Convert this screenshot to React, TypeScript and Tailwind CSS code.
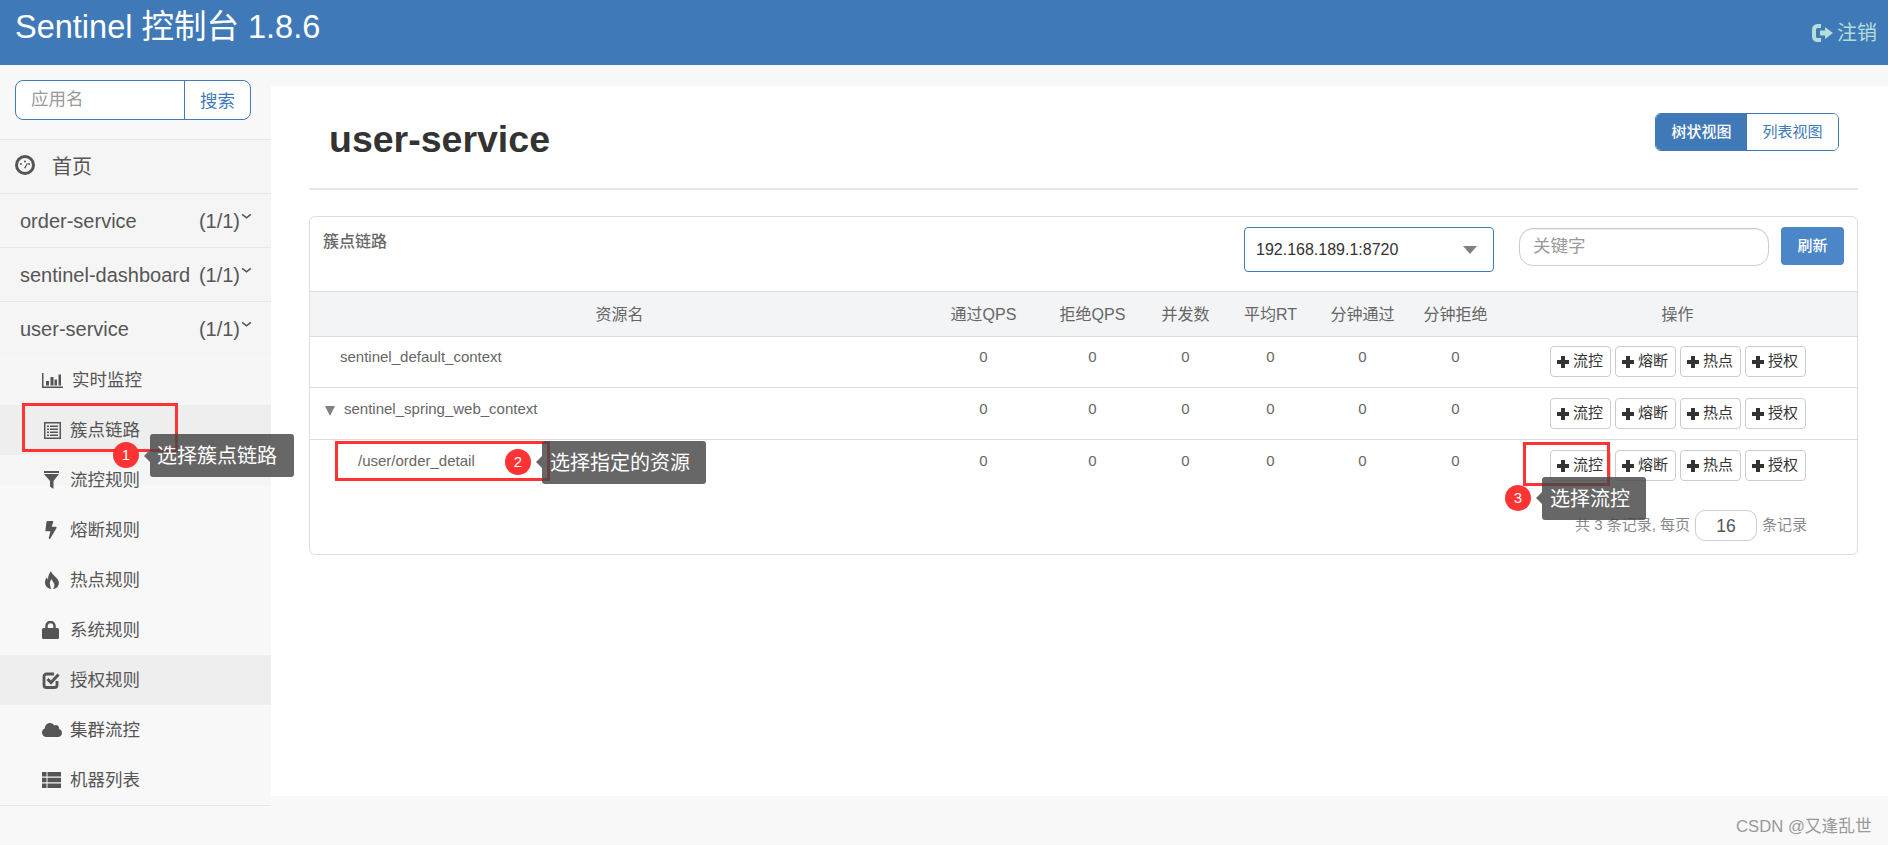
import { FaBolt, FaCloud } from "react-icons/fa";

const stats = ["0", "0", "0", "0", "0", "0"];
const cols = "grid grid-cols-[619px_109px_109px_77px_93px_91px_95px_1fr]";

function Gauge() {
  return (
    <svg viewBox="0 0 20 20" className="h-5 w-5 text-[#555]">
      <circle cx="10" cy="10" r="8.500" fill="none" stroke="currentColor" strokeWidth="3" />
      <circle cx="6" cy="9" r="1" fill="currentColor" />
      <circle cx="10" cy="6.500" r="1" fill="currentColor" />
      <circle cx="14" cy="9" r="1" fill="currentColor" />
      <path d="M9 13l3-5 0.800 0.500-2.400 5z" fill="currentColor" />
    </svg>
  );
}

function Bars() {
  return (
    <svg viewBox="0 0 21 15" className="h-[15px] w-[21px] fill-[#555]">
      <path d="M0 0h1.500v13.500H21V15H0z" />
      <path d="M4 8h3v4.500H4zM8.500 4h3v8.500h-3zM12.500 6.500h2.500v6h-2.500zM16.500 1.500h2.500v11h-2.500z" />
    </svg>
  );
}

function ListAlt() {
  return (
    <svg viewBox="0 0 17 17" className="h-[17px] w-[17px] fill-[#555]">
      <path d="M0 0h17v17H0zM1.500 1.500v14h14v-14z" fillRule="evenodd" clipRule="evenodd" />
      <path d="M3 3.500h2v1.500H3zM6 3.500h8v1.500H6zM3 6.500h2V8H3zM6 6.500h8V8H6zM3 9.500h2V11H3zM6 9.500h8V11H6zM3 12.500h2V14H3zM6 12.500h8V14H6z" />
    </svg>
  );
}

function Funnel() {
  return (
    <svg viewBox="0 0 15 18" className="h-[18px] w-[15px] fill-[#555]">
      <path d="M0 0h15v2H0zM0 3h15L9.500 10v8L6 15.500V10z" />
    </svg>
  );
}

function Flame() {
  return (
    <svg viewBox="0 0 16 18" className="h-[18px] w-4 fill-[#555]">
      <path d="M7 0C8 4 13 6 14.500 10C16 14 13 18 9 18C10 16.500 11 14.500 10 12.500C9.500 11 8 10 7.800 8C6 10 5.500 12 6 14C6.300 16 7 17 7.500 18C3.500 17.500 1 15 1 11.500C1 9 2 7 3 6C3 7 3.300 8 4 8.500C4 5 5 2.500 7 0Z" />
    </svg>
  );
}

function Lock() {
  return (
    <svg viewBox="0 0 17 18" className="h-[18px] w-[17px]">
      <path d="M4.500 8V5a4 4 0 0 1 8 0v3" fill="none" stroke="#555" strokeWidth="2.500" />
      <rect x="0" y="7" width="17" height="11" rx="1.500" fill="#555" />
    </svg>
  );
}

function CheckBox() {
  return (
    <svg viewBox="0 0 18 18" className="h-[18px] w-[18px]">
      <path d="M15 10v4a2.500 2.500 0 0 1-2.500 2.500h-8A2.500 2.500 0 0 1 2 14V5.500A2.500 2.500 0 0 1 4.500 3H12" fill="none" stroke="#555" strokeWidth="2.800" />
      <path d="M5.500 8l3.500 3.500L16.500 3.500" fill="none" stroke="#555" strokeWidth="3" />
    </svg>
  );
}

function ThList() {
  return (
    <svg viewBox="0 0 19 16" className="h-4 w-[19px] fill-[#555]">
      <path d="M0 0h4.500v4.500H0zM5.500 0H19v4.500H5.500zM0 5.750h4.500v4.500H0zM5.500 5.750H19v4.500H5.500zM0 11.500h4.500V16H0zM5.500 11.500H19V16H5.500z" />
    </svg>
  );
}

function Logout() {
  return (
    <svg viewBox="0 0 21 18" className="h-[18px] w-[21px] text-[#b4dfd8]">
      <path d="M9 2H5.500A3.500 3.500 0 0 0 2 5.500v7A3.500 3.500 0 0 0 5.500 16H9" fill="none" stroke="currentColor" strokeWidth="4" />
      <path d="M8 6.500h5V3l8 6-8 6v-3.500H8z" fill="currentColor" />
    </svg>
  );
}

function Plus() {
  return (
    <svg viewBox="0 0 12 12" className="h-3 w-3 fill-[#333]">
      <path d="M4 0h4v4h4v4H8v4H4V8H0V4h4z" />
    </svg>
  );
}

function Chevron() {
  return (
    <svg viewBox="0 0 12 8" className="mb-2 ml-px h-[7px] w-[11px]">
      <path d="M1 1.500l5 4 5-4" fill="none" stroke="#555" strokeWidth="1.800" />
    </svg>
  );
}

function AppRow({ name, count }: { name: string; count: string }) {
  return (
    <div className="flex h-[54px] items-center border-b border-[#e7e7e7] pl-5 pr-[19px] text-[20px] text-[#555]">
      <span>{name}</span>
      <span className="ml-auto">{count}</span>
      <Chevron />
    </div>
  );
}

function SubRow({ icon, label, className, labelClass }: { icon: React.ReactNode; label: string; className?: string; labelClass?: string }) {
  return (
    <div className={`flex h-[50px] items-center pl-[42px] text-[17.5px] text-[#555] ${className ?? ""}`}>
      <span className="flex w-7 items-center">{icon}</span>
      <span className={labelClass}>{label}</span>
    </div>
  );
}

function OpButton({ label }: { label: string }) {
  return (
    <button className="flex h-[31px] w-[61px] items-center justify-center gap-[4px] rounded-[4px] border border-[#ccc] bg-white text-[15px] text-[#333]">
      <Plus />
      {label}
    </button>
  );
}

function Row({ name, indent, top, tree, last }: { name: string; indent: string; top: string; tree?: boolean; last?: boolean }) {
  return (
    <div className={`${cols} ${last ? "h-[70px]" : "border-b border-[#ddd]"} ${top} text-[15px] text-[#666]`}>
      <div className={`flex h-[22px] items-center ${indent}`}>
        {tree && <span className="mr-[9px] mt-[3px] h-0 w-0 border-x-[5.500px] border-t-[10px] border-x-transparent border-t-[#808080]" />}
        {name}
      </div>
      {stats.map((v, i) => (
        <div key={i} className="h-[22px] text-center leading-[22px]">{v}</div>
      ))}
      <div className="flex justify-center gap-1 pr-[5px]">
        <OpButton label="流控" />
        <OpButton label="熔断" />
        <OpButton label="热点" />
        <OpButton label="授权" />
      </div>
    </div>
  );
}

export default function App() {
  return (
    <div className="relative flex h-screen flex-col overflow-hidden bg-[#f8f8f8] [font-family:'Liberation_Sans','Noto_Sans_CJK_SC',sans-serif]">
      <header className="flex h-[65px] shrink-0 items-start justify-between bg-[#4079b8] pl-[15px] pr-[11px]">
        <h1 className="pt-[9px] text-[32.500px] leading-9 text-white">Sentinel 控制台 1.8.6</h1>
        <div className="flex items-center gap-[4px] pt-[21px] text-[20px] leading-6 text-[#b4dfd8]">
          <Logout />
          注销
        </div>
      </header>

      <div className="flex min-h-0 flex-1">
        <aside className="w-[271px] shrink-0">
          <div className="flex h-[75px] border-b border-[#e7e7e7] bg-[#f8f8f8] pl-[15px] pt-[15px]">
            <div className="flex h-10 w-[236px] rounded-[8px] border border-[#4079b8] bg-white text-[17.5px]">
              <div className="flex-1 pl-[15px] leading-[36px] text-[#999]">应用名</div>
              <div className="w-[66px] border-l border-[#4079b8] text-center leading-[40px] text-[#4079b8]">搜索</div>
            </div>
          </div>
          <div className="flex h-[54px] items-center border-b border-[#e7e7e7] bg-[#f5f5f5] pl-[15px] text-[20px] text-[#555]">
            <span className="mb-1 w-[37px]"><Gauge /></span>
            首页
          </div>
          <div className="bg-[#f5f5f5]">
            <AppRow name="order-service" count="(1/1)" />
            <AppRow name="sentinel-dashboard" count="(1/1)" />
            <div className="flex h-[53px] items-center pl-5 pr-[19px] text-[20px] text-[#555]">
              <span>user-service</span>
              <span className="ml-auto">(1/1)</span>
              <Chevron />
            </div>
          </div>
          <div className="border-b border-[#e7e7e7]">
            <SubRow icon={<Bars />} label="实时监控" className="bg-[#f6f6f6]" labelClass="ml-0.5" />
            <SubRow icon={<span className="pl-0.5"><ListAlt /></span>} label="簇点链路" className="bg-[#eee]" />
            <SubRow icon={<span className="pl-0.5"><Funnel /></span>} label="流控规则" className="bg-[linear-gradient(#f5f5f5_31px,#f8f8f8_31px)]" />
            <SubRow icon={<FaBolt className="ml-[3px] h-[18px] w-[12px] text-[#555]" />} label="熔断规则" />
            <SubRow icon={<span className="pl-0.5"><Flame /></span>} label="热点规则" />
            <SubRow icon={<Lock />} label="系统规则" />
            <SubRow icon={<CheckBox />} label="授权规则" className="bg-[#eee]" />
            <SubRow icon={<FaCloud className="h-[16px] w-[20px] text-[#555]" />} label="集群流控" />
            <SubRow icon={<ThList />} label="机器列表" />
          </div>
        </aside>

        <main className="mt-[21px] mb-[49px] flex-1 bg-white pl-[38px] pr-[30px]">
          <div className="flex h-[104px] items-start justify-between border-b-2 border-[#e5e5e5] pr-[19px] pt-[27px]">
            <h2 className="pl-5 text-[37.500px] font-bold leading-[52px] text-[#333]">user-service</h2>
            <div className="flex h-[38px] w-[184px] overflow-hidden rounded-[6px] border border-[#4079b8] text-[15px]">
              <div className="flex-1 bg-[#4079b8] text-center font-medium leading-[36px] text-white">树状视图</div>
              <div className="flex-1 bg-white text-center leading-[36px] text-[#4079b8]">列表视图</div>
            </div>
          </div>

          <section className="mt-[26px] rounded-[6px] border border-[#ddd]">
            <div className="flex h-[74px] items-start pl-[13px] pr-[13px] pt-[10px]">
              <h3 className="pt-1 text-[16px] font-medium leading-[22px] text-[#666]">簇点链路</h3>
              <div className="ml-auto flex h-[45px] w-[250px] items-center justify-between rounded-[4px] border border-[#4079b8] pl-[11px] pr-4 text-[16px] text-[#333]">
                192.168.189.1:8720
                <span className="h-0 w-0 border-x-[7px] border-t-[8px] border-x-transparent border-t-[#808080]" />
              </div>
              <div className="ml-[25px] mt-px h-[38px] w-[250px] rounded-[14px] border border-[#ccc] pl-[13px] text-[17.5px] leading-[34px] text-[#999] shadow-[inset_0_1px_1px_rgba(0,0,0,0.075)]">关键字</div>
              <button className="ml-3 h-[38px] w-[63px] rounded-[4px] bg-[#4a86c8] text-[15px] font-medium text-white">刷新</button>
            </div>

            <div className={`${cols} h-[46px] border-y border-[#ddd] bg-[#f3f4f6] text-center text-[16px] leading-[45px] text-[#666]`}>
              <div>资源名</div>
              <div>通过QPS</div>
              <div>拒绝QPS</div>
              <div>并发数</div>
              <div>平均RT</div>
              <div>分钟通过</div>
              <div>分钟拒绝</div>
              <div className="pr-[5px]">操作</div>
            </div>

            <Row name="sentinel_default_context" indent="pl-[30px]" top="h-[51px] pt-[9px]" />
            <Row name="sentinel_spring_web_context" indent="pl-[15px]" top="h-[52px] pt-[10px]" tree />
            <Row name="/user/order_detail" indent="pl-[48px]" top="pt-[10px]" last />

            <div className="flex h-[44px] items-start justify-end gap-[5px] pr-[50px] text-[15px] leading-[30px] text-[#888]">
              <span>共 3 条记录, 每页</span>
              <span className="h-[31px] w-[62px] rounded-[10px] border border-[#ccc] text-center text-[17.5px] text-[#555]">16</span>
              <span>条记录</span>
            </div>
          </section>
        </main>
      </div>

      {/* annotations */}
      <div className="absolute left-[22px] top-[403px] h-[49px] w-[156px] border-[3px] border-[#f33]" />
      <div className="absolute left-[113px] top-[442px] flex h-[26px] w-[26px] items-center justify-center rounded-full bg-[#f33] text-[15px] text-white">1</div>
      <div className="absolute left-[144px] top-[450px] h-0 w-0 border-y-[6px] border-r-[6px] border-y-transparent border-r-[#666]" />
      <div className="absolute left-[150px] top-[434px] flex h-[43px] w-[144px] items-center rounded-[3px] bg-[rgba(70,70,70,0.82)] pl-[7px] text-[20px] text-white">选择簇点链路</div>

      <div className="absolute left-[335px] top-[441px] h-[40px] w-[215px] border-[3px] border-[#f33]" />
      <div className="absolute left-[505px] top-[449px] flex h-[26px] w-[26px] items-center justify-center rounded-full bg-[#f33] text-[15px] text-white">2</div>
      <div className="absolute left-[536px] top-[456px] h-0 w-0 border-y-[6px] border-r-[6px] border-y-transparent border-r-[#666]" />
      <div className="absolute left-[542px] top-[441px] flex h-[43px] w-[164px] items-center rounded-[3px] bg-[rgba(70,70,70,0.82)] pl-2 text-[20px] text-white">选择指定的资源</div>

      <div className="absolute left-[1523px] top-[442px] h-[44px] w-[87px] border-[3px] border-[#f33]" />
      <div className="absolute left-[1505px] top-[485px] flex h-[26px] w-[26px] items-center justify-center rounded-full bg-[#f33] text-[15px] text-white">3</div>
      <div className="absolute left-[1536px] top-[492px] h-0 w-0 border-y-[6px] border-r-[6px] border-y-transparent border-r-[#666]" />
      <div className="absolute left-[1542px] top-[477px] flex h-[43px] w-[104px] items-center rounded-[3px] bg-[rgba(70,70,70,0.82)] pl-2 text-[20px] text-white">选择流控</div>

      <div className="absolute left-[1736px] top-[817px] text-[16.700px] leading-5 text-[#999]">CSDN @又逢乱世</div>
    </div>
  );
}
